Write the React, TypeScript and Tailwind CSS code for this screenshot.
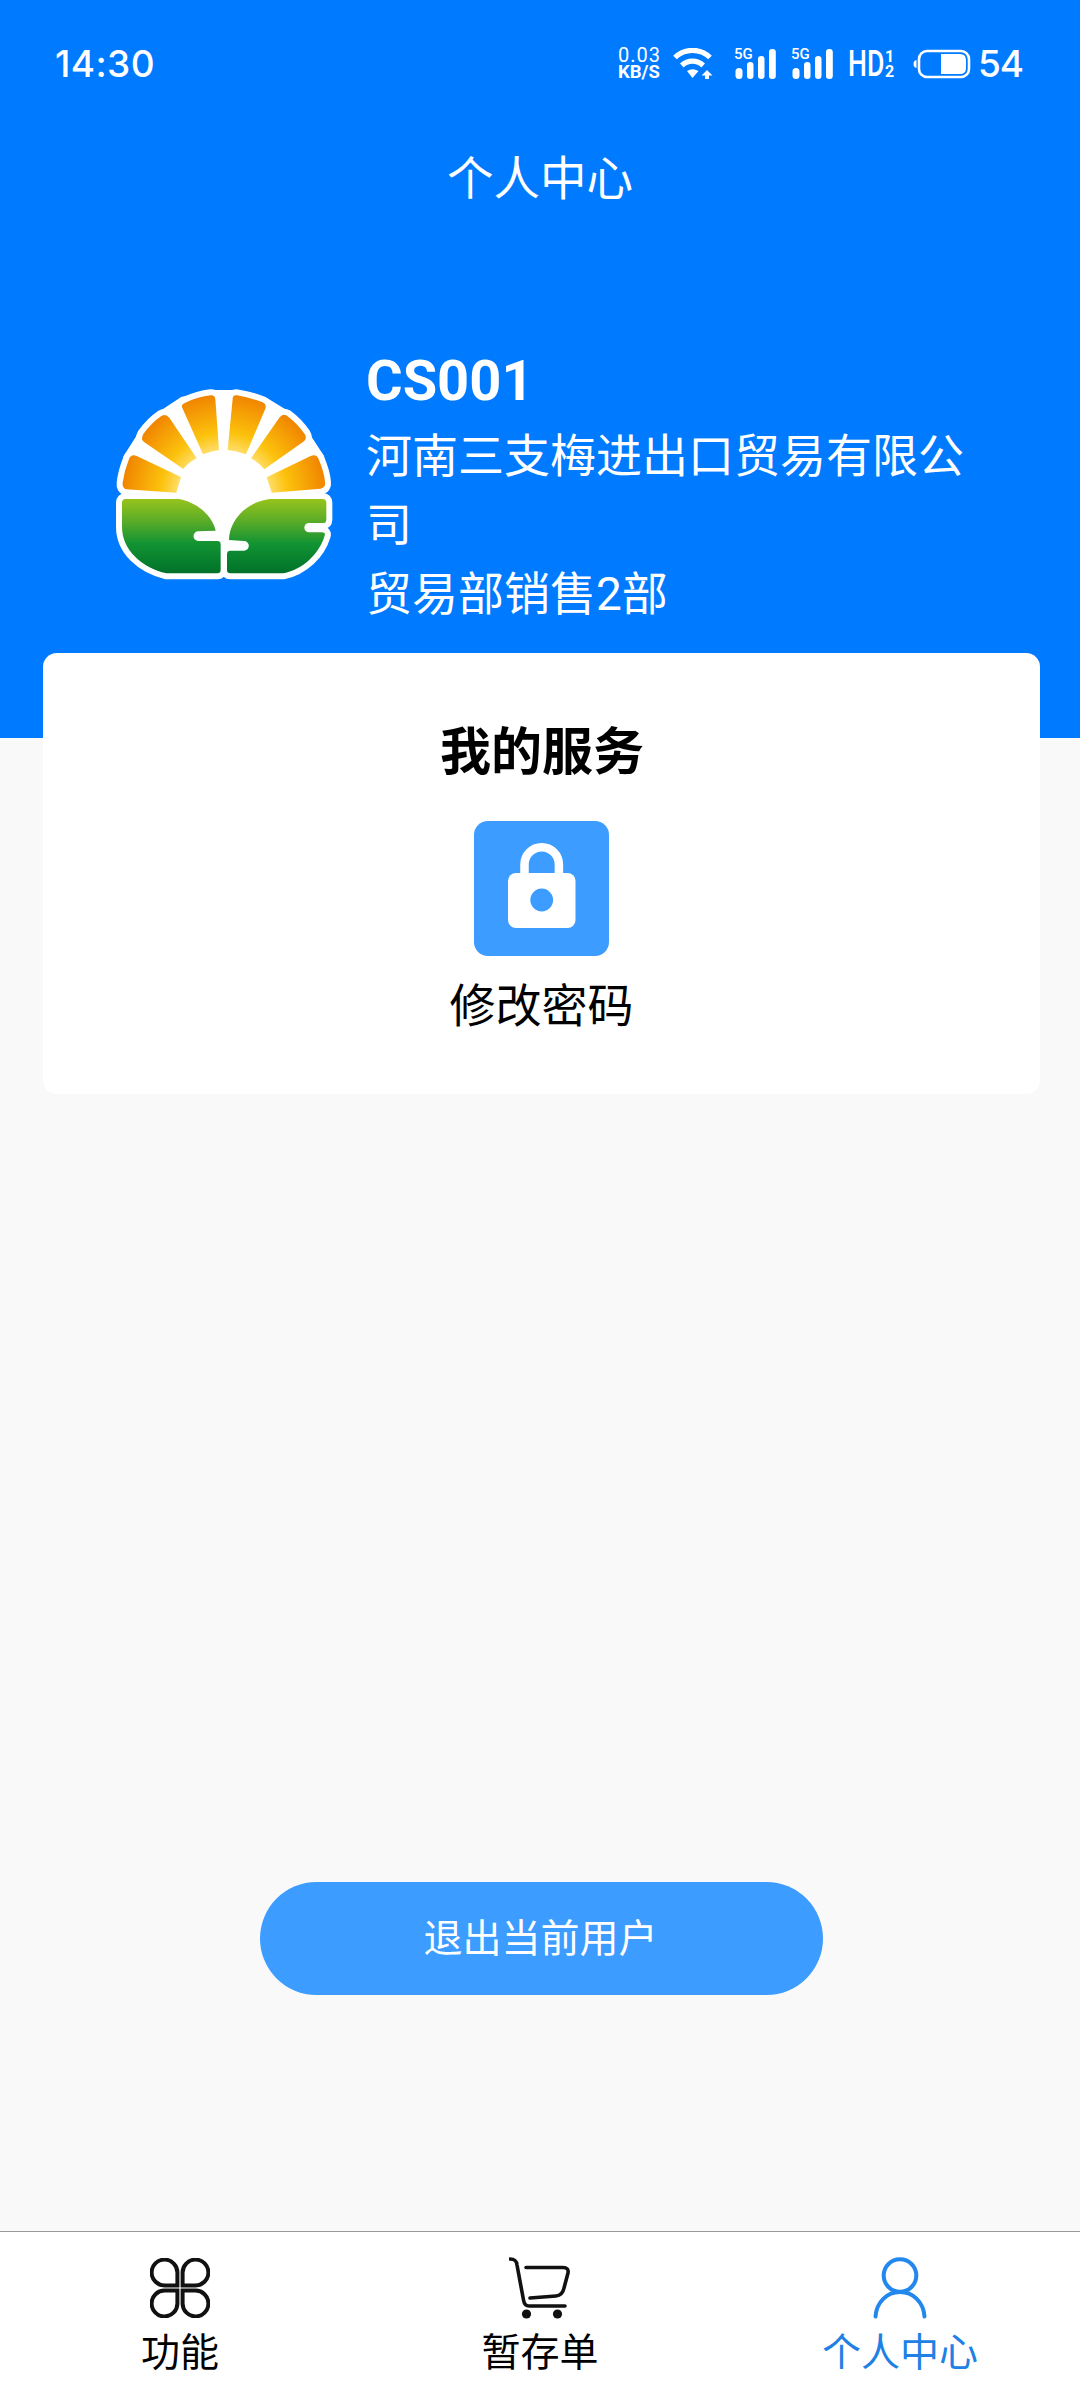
import React from 'react';

const PETALS = [
  'M86 300 Q92 281 110 288 L243 351 L229 398 L80 388 Q66 386 68 368 Q72 335 86 300 Z',
  'M130 222 Q155 188 184 168 Q198 160 208 173 L290 295 Q265 308 250 327 L132 246 Q121 238 130 222 Z',
  'M256 128 Q295 110 332 106 Q345 105 346 118 L357 270 Q332 274 309 283 L247 144 Q242 134 256 128 Z',
  'M398 116 Q399 104 411 106 Q450 112 488 127 Q501 133 496 146 L438 283 Q410 273 383 270 Z',
  'M539 172 Q548 159 561 167 Q592 190 614 222 Q623 236 610 245 L493 328 Q477 308 453 295 Z',
  'M632 288 Q650 281 656 298 Q672 335 675 366 Q677 383 662 386 L515 398 L500 352 Z',
];

const LEAVES = [
  'M77 417 H235 C290 425 338 468 347 512 L295 514 A14.500 14.500 0 0 0 295 543 H352 Q362 543 362 553 V630 Q362 640 352 640 H200 C125 622 66 570 66 500 V428 Q66 417 77 417 Z',
  'M510 417 H668 Q679 417 679 428 V479 Q679 489 669 489 H627 A14 14 0 0 0 627 517 H666 Q677 517 674 527 C658 580 610 628 550 640 H391 Q381 640 381 630 V582 Q381 572 391 572 H432 A14.500 14.500 0 0 0 432 543 L387 540 C388 480 440 425 510 417 Z',
];

const Logo = () => (
  <svg viewBox="0 0 750 720" className="w-[250px] h-[240px] shrink-0">
    <defs>
      <radialGradient id="sun" gradientUnits="userSpaceOnUse" cx="372" cy="410" r="310">
        <stop offset="0.42" stopColor="#ffe27a" />
        <stop offset="0.62" stopColor="#fcc20c" />
        <stop offset="0.82" stopColor="#f6a106" />
        <stop offset="1" stopColor="#f08300" />
      </radialGradient>
      <linearGradient id="leaf" gradientUnits="userSpaceOnUse" x1="0" y1="417" x2="0" y2="640">
        <stop offset="0" stopColor="#97c31c" />
        <stop offset="0.3" stopColor="#5aac28" />
        <stop offset="0.6" stopColor="#129333" />
        <stop offset="1" stopColor="#00722a" />
      </linearGradient>
    </defs>
    <g fill="#fff" stroke="#fff" strokeWidth="36" strokeLinejoin="round">
      <path d="M88 295 L128 232 L190 168 L250 128 L338 108 H405 L493 130 L555 168 L616 235 L655 295 L640 400 L380 560 H355 L100 400 Z" />
      {[...PETALS, ...LEAVES].map(d => <path key={d} d={d} />)}
    </g>
    {PETALS.map(d => <path key={d} d={d} fill="url(#sun)" />)}
    {LEAVES.map(d => <path key={d} d={d} fill="url(#leaf)" />)}
  </svg>
);

const WifiIcon = () => (
  <svg viewBox="0 0 40 32" className="w-[40px] h-[32px]" fill="none" stroke="#fff" strokeWidth="5.200">
    <path d="M2 9.500 A25 25 0 0 1 37 9.500" />
    <path d="M8.800 17.500 A15.500 15.500 0 0 1 30.200 17.500" />
    <path d="M14 23 Q19.500 19.500 25.500 23 L19.500 30 Z" fill="#fff" stroke="none" />
    <path d="M34 22 L39.500 27.500 H36 V31 H32 V27.500 H28.500 Z" fill="#fff" stroke="none" />
  </svg>
);

const SignalIcon = () => (
  <div className="relative h-[32px] w-[42px]">
    <svg viewBox="0 0 42 32" className="h-full w-full" fill="#fff">
      <rect x="0.500" y="20" width="7" height="11" rx="3.500" />
      <rect x="12" y="14" width="6.500" height="17" rx="3.200" />
      <rect x="23" y="8" width="6.500" height="23" rx="3.200" />
      <rect x="34" y="1" width="6.800" height="30" rx="3.200" />
    </svg>
    <span className="absolute -top-[2px] -left-[1px] text-[15px] leading-[16px] font-medium">5G</span>
  </div>
);

const BatteryIcon = () => (
  <svg viewBox="0 0 58 30" className="w-[58px] h-[30px]">
    <path d="M3.500 11 Q0.500 11.500 0.500 15 T3.500 19 Z" fill="#fff" />
    <rect x="6" y="2" width="50" height="26" rx="8" fill="none" stroke="#fff" strokeWidth="2.600" />
    <path d="M28 5 H47 Q53 5 53 11 V19 Q53 25 47 25 H28 Z" fill="#fff" />
  </svg>
);

const StatusBar = () => (
  <div className="flex h-[127px] items-center justify-between pl-[55px] pr-[56px]">
    <span className="font-[Inter] text-[37px] leading-none font-medium tracking-[0.4px]">14:30</span>
    <div className="flex items-center">
      <div className="mr-[10px] flex w-[45px] flex-col">
        <span className="text-[20px] leading-[17px] tracking-[1px]">0.03</span>
        <span className="text-[18.500px] leading-[16px] font-bold whitespace-nowrap">KB/S</span>
      </div>
      <WifiIcon />
      <div className="ml-[22px]"><SignalIcon /></div>
      <div className="ml-[15px]"><SignalIcon /></div>
      <div className="ml-[14px] flex h-[32px] w-[48px] items-center">
        <span className="w-[37px] origin-left scale-x-[0.74] text-[36px] leading-[32px] font-medium">HD</span>
        <span className="flex flex-col text-[16px] leading-[15px] font-bold">
          <span>1</span>
          <span>2</span>
        </span>
      </div>
      <div className="ml-[17px]"><BatteryIcon /></div>
      <span className="ml-[7px] w-[46px] font-[Inter] text-[37px] leading-none font-medium tracking-[-1px]">54</span>
    </div>
  </div>
);

const FunctionIcon = () => (
  <svg viewBox="0 0 60 60" className="w-[60px] h-[60px]" fill="none" stroke="#111" strokeWidth="4">
    {[0, 90, 180, 270].map(angle => (
      <path key={angle} transform={`rotate(${angle} 30 30)`} d="M27.400 27.400 H14.800 A12.900 12.900 0 1 1 27.400 14.800 Z" />
    ))}
  </svg>
);

const CartIcon = () => (
  <svg viewBox="0 0 62 62" className="w-[62px] h-[62px]" fill="none" stroke="#111" strokeWidth="3.600" strokeLinecap="round" strokeLinejoin="round">
    <path d="M1 2 C6 2 7.500 4 8 8 L14.500 43 Q15.500 49 20 49 H56" />
    <path d="M17 10.500 H54 Q60 10.500 59 16 L55 31 Q53.500 38.500 47 39 L21 41" />
    <circle cx="17.500" cy="57" r="4.600" fill="#111" stroke="none" />
    <circle cx="48.500" cy="57" r="4.600" fill="#111" stroke="none" />
  </svg>
);

const UserIcon = () => (
  <svg viewBox="0 0 56 62" className="w-[56px] h-[62px]" fill="none" stroke="#2288ee" strokeWidth="4" strokeLinecap="round">
    <circle cx="28" cy="18.500" r="16.300" />
    <path d="M3.500 59.500 C4.500 45 15 35 28 35 S51.500 45 52.500 59.500" />
  </svg>
);

const TABS = [
  { label: '功能', icon: <FunctionIcon />, active: false },
  { label: '暂存单', icon: <CartIcon />, active: false },
  { label: '个人中心', icon: <UserIcon />, active: true },
];

const App: React.FC = () => {
  return (
    <div className="flex h-[2400px] w-[1080px] flex-col bg-[#f9f9f9] font-[Roboto,'Noto_Sans_CJK_SC',sans-serif] text-black" lang="zh-CN">
      <header className="h-[738px] shrink-0 bg-[#007aff] text-white">
        <StatusBar />
        <h1 className="h-[104px] text-center text-[46.500px] leading-[104px]">个人中心</h1>
        <div className="mt-[113px] flex pl-[100px]">
          <div className="pt-[16px]"><Logo /></div>
          <div className="ml-[16px] w-[610px]">
            <div className="h-[78px] text-[56px] leading-[75px] font-bold">CS001</div>
            <div className="text-[46px] leading-[69px]">河南三支梅进出口贸易有限公司</div>
            <div className="text-[46px] leading-[69px]">贸易部销售2部</div>
          </div>
        </div>
      </header>

      {/* Services card, pulled up over the header */}
      <section className="relative ml-[43px] -mt-[85px] flex h-[441px] w-[997px] shrink-0 flex-col items-center rounded-[14px] bg-white pt-[62px]">
        <h2 className="pl-[1px] text-[51px] leading-[76px] font-bold">我的服务</h2>
        <div className="mt-[30px] h-[135px] w-[135px] rounded-[14px] bg-[#3c9cff]">
          <svg viewBox="0 0 135 135" className="h-full w-full">
            <path d="M50.500 56 V43.500 A17.200 17.200 0 0 1 84.900 43.500 V56" fill="none" stroke="#fff" strokeWidth="8.500" />
            <rect x="34" y="52" width="67.500" height="55" rx="8" fill="#fff" />
            <circle cx="67.700" cy="79" r="11.400" fill="#3c9cff" />
          </svg>
        </div>
        <span className="mt-[16px] text-[46px] leading-[69px]">修改密码</span>
      </section>

      <button className="ml-[260px] mt-auto mb-[236px] h-[113px] w-[563px] shrink-0 rounded-full bg-[#3c9cff] pr-[2px] pt-[1px] text-[39px] text-white">
        退出当前用户
      </button>

      <nav className="grid h-[169px] shrink-0 grid-cols-3 border-t border-[#999] bg-white">
        {TABS.map(tab => (
          <div key={tab.label} className={`flex flex-col items-center pt-[25px] ${tab.active ? 'text-[#2080e4]' : ''}`}>
            <div className="flex h-[62px] items-center">{tab.icon}</div>
            <span className="mt-[5px] text-[39px] leading-[58px]">{tab.label}</span>
          </div>
        ))}
      </nav>
    </div>
  );
};

export default App;
